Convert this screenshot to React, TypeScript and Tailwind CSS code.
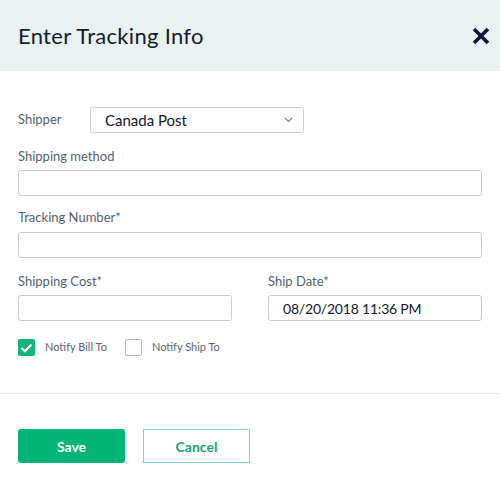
import React from "react";

export default function App() {
  return (
    <div className="w-[500px] h-[500px] bg-white flex flex-col" style={{ fontFamily: "Lato, 'Open Sans', sans-serif" }}>
      <div className="h-[71px] bg-[#eaf1f1] flex items-center justify-between pl-[18px] pr-[10px] shrink-0">
        <h1 className="text-[22px] text-[#171a2c] tracking-[0.3px]">Enter Tracking Info</h1>
        <svg width="18" height="18" viewBox="0 0 18 18" className="mt-[1px]">
          <path d="M2 2 L16 16 M16 2 L2 16" stroke="#161638" strokeWidth="3.6" strokeLinecap="butt" />
        </svg>
      </div>
      <div className="px-[18px] pt-[36px] flex flex-col">
        <div className="flex items-center h-[26px]">
          <span className="w-[72px] text-[13px] text-[#56616c]">Shipper</span>
          <div className="w-[214px] h-[26px] border border-[#c8ccd1] rounded-[3px] flex items-center justify-between pl-[14px] pr-[10px]">
            <span className="text-[15px] text-[#14172a]">Canada Post</span>
            <svg width="9" height="6" viewBox="0 0 9 6">
              <path d="M1 1 L4.5 4.5 L8 1" stroke="#7a828a" strokeWidth="1.1" fill="none" />
            </svg>
          </div>
        </div>
        <label className="mt-[14px] text-[13px] text-[#56616c] leading-[18px]">Shipping method</label>
        <div className="mt-[5px] h-[26px] border border-[#c8ccd1] rounded-[3px]" />
        <label className="mt-[12px] text-[13px] text-[#56616c] leading-[18px]">Tracking Number*</label>
        <div className="mt-[6px] h-[26px] border border-[#c8ccd1] rounded-[3px]" />
        <div className="mt-[14px] grid grid-cols-2 gap-[36px]">
          <div className="flex flex-col">
            <label className="text-[13px] text-[#56616c] leading-[18px]">Shipping Cost*</label>
            <div className="mt-[5px] h-[26px] border border-[#c8ccd1] rounded-[3px]" />
          </div>
          <div className="flex flex-col">
            <label className="text-[13px] text-[#56616c] leading-[18px]">Ship Date*</label>
            <div className="mt-[5px] h-[26px] border border-[#c8ccd1] rounded-[3px] flex items-center pl-[14px]">
              <span className="text-[14px] tracking-[-0.2px] text-[#14172a]">08/20/2018 11:36 PM</span>
            </div>
          </div>
        </div>
        <div className="mt-[18px] flex items-center h-[17px]">
          <div className="w-[17px] h-[17px] bg-[#13b57a] rounded-[2px] flex items-center justify-center">
            <svg width="13" height="10" viewBox="0 0 13 10">
              <path d="M1.5 5 L5 8.3 L11.5 1.5" stroke="white" strokeWidth="2.2" fill="none" />
            </svg>
          </div>
          <span className="ml-[10px] text-[11px] text-[#5a6470]">Notify Bill To</span>
          <div className="ml-[18px] w-[17px] h-[17px] border border-[#b5b9be] rounded-[2px]" />
          <span className="ml-[10px] text-[11px] text-[#5a6470]">Notify Ship To</span>
        </div>
      </div>
      <div className="mt-[37px] border-t border-[#e6eeee]" />
      <div className="px-[18px] pt-[35px] flex gap-[18px]">
        <button className="w-[107px] h-[34px] bg-[#00b575] rounded-[3px] text-white text-[14px] font-bold">Save</button>
        <button className="w-[107px] h-[34px] border border-[#86d6b5] text-[#13a873] text-[14px] font-bold">Cancel</button>
      </div>
    </div>
  );
}
